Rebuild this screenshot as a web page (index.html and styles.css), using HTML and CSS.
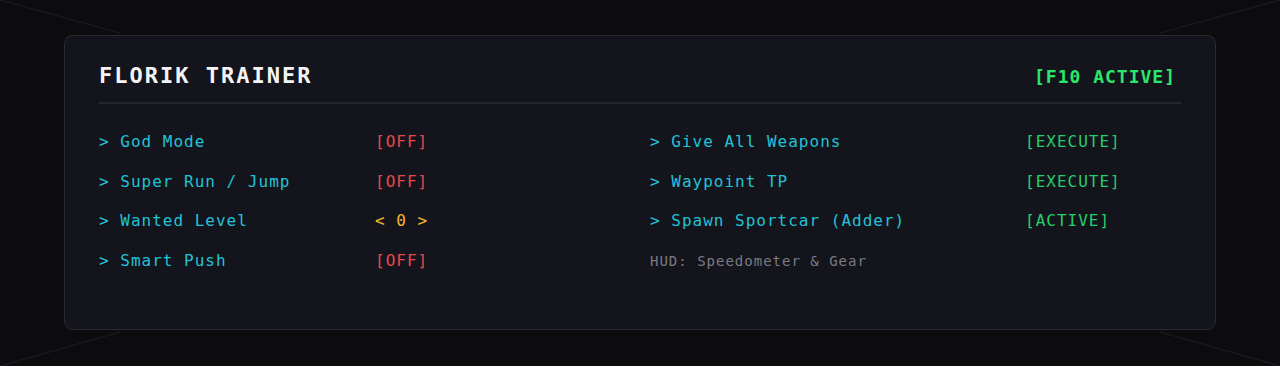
FILE: index.html
```html
<!DOCTYPE html>
<html>
	<head>
		<meta charset="utf-8">
		<title>Florik Trainer</title>
		<link rel="stylesheet" href="styles.css">
	</head>
	<body>
		<svg class="backdrop" width="1280" height="366" viewBox="0 0 1280 366">
			<line x1="0" y1="0" x2="120" y2="33" />
			<line x1="1280" y1="0" x2="1160" y2="33" />
			<line x1="0" y1="366" x2="120" y2="332" />
			<line x1="1280" y1="366" x2="1160" y2="332" />
		</svg>
		<div class="menu">
			<div class="head">
				<h1 class="title">FLORIK TRAINER</h1>
				<span class="hotkey">[F10 ACTIVE]</span>
			</div>
			<div class="cols">
				<div class="col left">
					<span class="item">&gt; God Mode</span> <span class="off">[OFF]</span>
					<span class="item">&gt; Super Run / Jump</span> <span class="off">[OFF]</span>
					<span class="item">&gt; Wanted Level</span> <span class="level">&lt; 0 &gt;</span>
					<span class="item">&gt; Smart Push</span> <span class="off">[OFF]</span>
				</div>
				<div class="col right">
					<span class="item">&gt; Give All Weapons</span> <span class="on">[EXECUTE]</span>
					<span class="item">&gt; Waypoint TP</span> <span class="on">[EXECUTE]</span>
					<span class="item">&gt; Spawn Sportcar (Adder)</span> <span class="on">[ACTIVE]</span>
					<span class="hud">HUD: Speedometer &amp; Gear</span> <span></span>
				</div>
			</div>
		</div>
	</body>
</html>
```

FILE: styles.css
```css
* {
	box-sizing: border-box;
}
body {
	margin: 0;
	height: 366px;
	background-color: #0c0c0e;
	font-family: "DejaVu Sans Mono", "Liberation Mono", monospace;
	display: flex;
	justify-content: center;
	padding-top: 35px;
	overflow: hidden;
}
.backdrop {
	position: absolute;
	left: 0;
	top: 0;
	z-index: 0;
}
.backdrop line {
	stroke: #1c1c22;
	stroke-width: 1.2;
}
.menu {
	position: relative;
	z-index: 1;
	width: 1152px;
	height: 295px;
	background-color: #14141c;
	border: 1px solid #2a2a34;
	border-radius: 9px;
	padding: 26px 34px 0 34px;
}
.head {
	display: flex;
	justify-content: space-between;
	align-items: center;
	height: 42px;
	padding-bottom: 12px;
	border-bottom: 2px solid #25252e;
	margin-bottom: 26px;
}
.title {
	margin: 0;
	font-size: 22px;
	line-height: 30px;
	letter-spacing: 2px;
	font-weight: 700;
	color: #f4f4f6;
}
.hotkey {
	font-size: 18px;
	letter-spacing: 1px;
	font-weight: 700;
	color: #2ae76b;
	margin-right: 5px;
}
.cols {
	display: grid;
	grid-template-columns: 1fr 1fr;
	column-gap: 20px;
}
.col {
	display: grid;
	row-gap: 15.5px;
	font-size: 16px;
	line-height: 24px;
	letter-spacing: 1px;
	align-items: center;
}
.left {
	grid-template-columns: 276px auto;
}
.right {
	grid-template-columns: 375px auto;
}
.item {
	color: #22c2d6;
}
.off {
	color: #e24a4c;
}
.level {
	color: #f3b72c;
}
.on {
	color: #22cf68;
}
.hud {
	font-size: 14px;
	color: #7b7b85;
}
```
